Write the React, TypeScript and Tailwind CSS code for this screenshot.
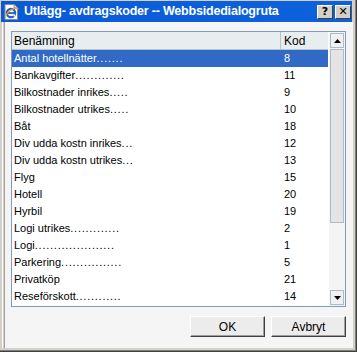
import React from "react";

const rows: [string, string, string][] = [
  ["Antal hotellnätter", ".......", "8"],
  ["Bankavgifter", ".............", "11"],
  ["Bilkostnader inrikes", ".....", "9"],
  ["Bilkostnader utrikes", ".....", "10"],
  ["Båt", "", "18"],
  ["Div udda kostn inrikes", "...", "12"],
  ["Div udda kostn utrikes", "...", "13"],
  ["Flyg", "", "15"],
  ["Hotell", "", "20"],
  ["Hyrbil", "", "19"],
  ["Logi utrikes", ".............", "2"],
  ["Logi", ".....................", "1"],
  ["Parkering", "................", "5"],
  ["Privatköp", "", "21"],
  ["Reseförskott", "............", "14"],
];

function IEIcon() {
  return (
    <svg width="16" height="16" viewBox="0 0 16 16">
      <path d="M1 0.5 H10 L13.5 4 V15.5 H1 Z" fill="#ffffff" stroke="#8a8a8a" />
      <path d="M10 0.5 V4 H13.5" fill="#e0e0e0" stroke="#8a8a8a" />
      <circle cx="7" cy="9" r="4.2" fill="none" stroke="#1f5fd0" strokeWidth="2.2" />
      <path d="M3.2 9 H10.8" stroke="#1f5fd0" strokeWidth="1.8" />
      <path d="M9.5 11.2 L11.2 11.6" stroke="#ffffff" strokeWidth="2" />
      <path d="M1.5 12.5 C4 6 11 3 14.5 5" fill="none" stroke="#f0a020" strokeWidth="1.2" />
    </svg>
  );
}

function TitleBtn({ children }: { children: React.ReactNode }) {
  return (
    <div
      className="w-[16px] h-[14px] shrink-0 bg-[#d4d0c8] border border-t-white border-l-white border-r-[#404040] border-b-[#404040] flex items-center justify-center text-[11px] font-bold leading-none text-black"
      style={{ fontFamily: "'DejaVu Sans', sans-serif" }}
    >
      {children}
    </div>
  );
}

function Arrow({ up }: { up?: boolean }) {
  return (
    <svg width="7" height="4" viewBox="0 0 7 4">
      {up ? <path d="M0 4 L3.5 0 L7 4 Z" fill="#000" /> : <path d="M0 0 L7 0 L3.5 4 Z" fill="#000" />}
    </svg>
  );
}

function WinButton({ label }: { label: string }) {
  return (
    <div className="w-[75px] h-[21px] bg-[#ececec] border border-t-white border-l-white border-r-[#404040] border-b-[#404040] shadow-[inset_-1px_-1px_0_#a0a0a0] flex items-center justify-center text-[12px] text-black">
      {label}
    </div>
  );
}

export default function App() {
  return (
    <div
      className="w-[357px] h-[352px] bg-[#d4d0c8] border-r border-b border-r-[#404040] border-b-[#404040] flex flex-col overflow-hidden"
      style={{ fontFamily: "'Liberation Sans', Arial, sans-serif" }}
    >
      <div className="flex-1 min-w-0 flex flex-col border-r border-b border-r-[#808080] border-b-[#808080] pt-[1px] pl-[1px] pr-[2px] pb-[2px]">
        <div className="h-[21px] min-w-0 bg-gradient-to-r from-[#0a5ad6] to-[#0d62dc] flex items-center pl-[3px] pr-[1px] shrink-0 mr-[1px]">
          <div className="shrink-0 flex">
            <IEIcon />
          </div>
          <div className="ml-[4px] min-w-0 overflow-hidden text-white font-bold text-[12.5px] tracking-[-0.2px] leading-none flex-1 whitespace-nowrap">
            Utlägg- avdragskoder -- Webbsidedialogruta
          </div>
          <div className="flex gap-[2px] shrink-0">
            <TitleBtn>?</TitleBtn>
            <TitleBtn>✕</TitleBtn>
          </div>
        </div>
        <div className="flex-1 ml-[1px] border-l border-l-white flex">
          <div className="flex-1 ml-[1px] border-l border-l-[#a0a0a0] bg-[#f5f5f5] pt-[9px] pl-[6px] pr-[7px] flex flex-col">
            <div className="h-[276px] border border-[#7f9db9] bg-white flex">
              <div className="flex-1 flex flex-col">
                <div className="h-[18px] bg-[#e8eef0] border-b border-[#b8c4cc] flex text-[12px] text-black items-center">
                  <div className="w-[269px] pl-[2px] border-r border-[#b8c4cc] h-full flex items-center">Benämning</div>
                  <div className="pl-[3px]">Kod</div>
                </div>
                {rows.map(([name, dots, code], i) => (
                  <div
                    key={i}
                    className={`h-[17px] flex items-center text-[11px] ${i === 0 ? "bg-[#316ac5] text-white" : "text-black"}`}
                  >
                    <div className="w-[270px] pl-[2px] whitespace-nowrap">
                      {name}
                      <span className="tracking-[0.75px]">{dots}</span>
                    </div>
                    <div className="pl-[2px]">{code}</div>
                  </div>
                ))}
              </div>
              <div className="w-[17px] bg-[#f4f4f4] flex flex-col p-[1px] border-l border-white">
                <div className="h-[15px] bg-[#f0f0f0] border border-[#a8bccb] flex items-center justify-center">
                  <Arrow up />
                </div>
                <div className="h-[174px] mt-[1px] bg-[#e4e4e4] border border-[#a8bccb]" />
                <div className="flex-1" />
                <div className="h-[15px] bg-[#f0f0f0] border border-[#a8bccb] flex items-center justify-center">
                  <Arrow />
                </div>
              </div>
            </div>
            <div className="flex justify-end gap-[6px] mt-[9px]">
              <WinButton label="OK" />
              <WinButton label="Avbryt" />
            </div>
          </div>
        </div>
      </div>
    </div>
  );
}
